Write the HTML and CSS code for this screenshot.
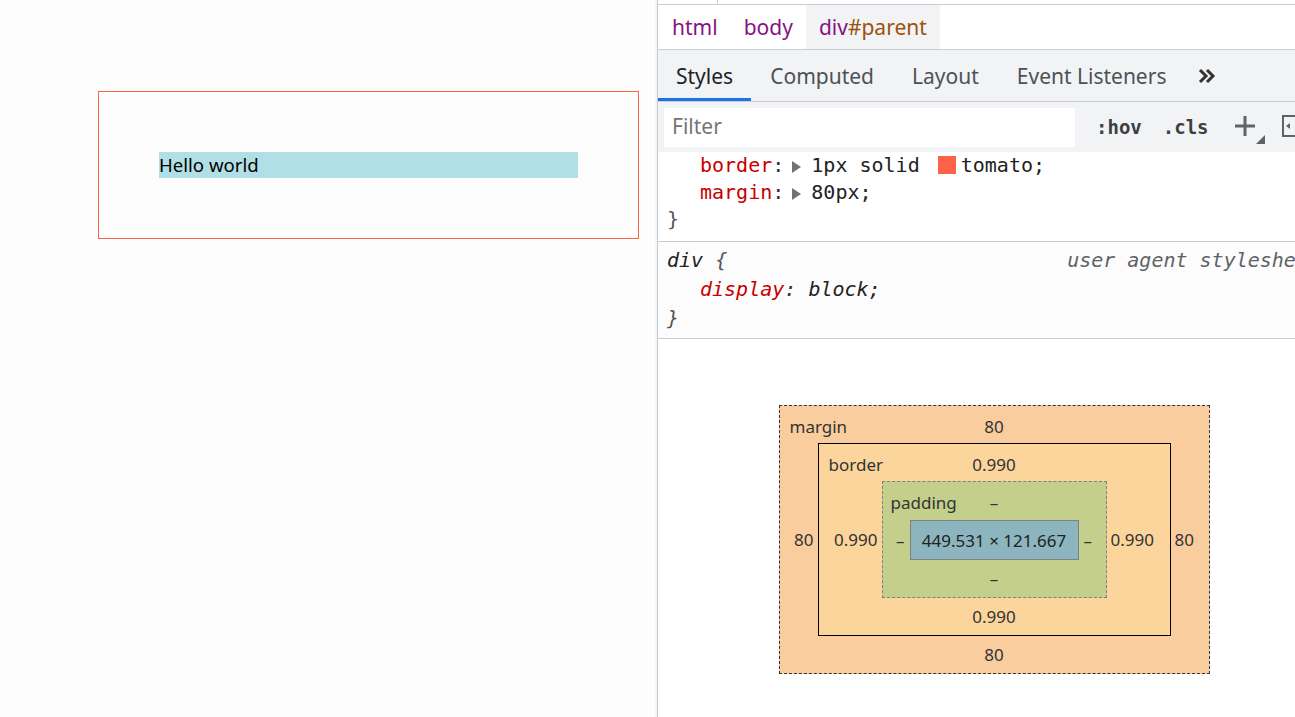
FILE: index.html
```html
<!DOCTYPE html>
<html>
<head>
<meta charset="utf-8">
<link rel="stylesheet" href="styles.css">
</head>
<body>
<div class="screen">
  <div class="page">
    <div class="parent"><div class="child">Hello world</div></div>
  </div>
  <div class="devtools">
    <div class="topstrip"><span class="tick"></span></div>
    <div class="crumbs">
      <span class="crumb tag">html</span>
      <span class="crumb tag">body</span>
      <span class="crumb sel"><span class="tag">div</span><span class="id">#parent</span></span>
    </div>
    <div class="tabs">
      <span class="tab active">Styles</span>
      <span class="tab">Computed</span>
      <span class="tab">Layout</span>
      <span class="tab">Event Listeners</span>
      <span class="tab more"><svg width="18" height="16" viewBox="0 0 18 16"><path d="M2 2 L8 8 L2 14 M9 2 L15 8 L9 14" fill="none" stroke="#333" stroke-width="3"/></svg></span>
    </div>
    <div class="toolbar">
      <div class="filter">Filter</div>
      <span class="tbtn">:hov</span>
      <span class="tbtn">.cls</span>
      <svg class="plus" width="32" height="34" viewBox="0 0 32 34"><path d="M0 13 H20 M10 3 V23" stroke="#5f6368" stroke-width="3" fill="none"/><path d="M30 22 V31 H21 Z" fill="#5f6368"/></svg>
      <svg class="boxicon" width="24" height="24" viewBox="0 0 24 24"><rect x="1" y="1" width="21" height="20" fill="none" stroke="#5f6368" stroke-width="2"/><path d="M8 8 L4 11 L8 14 Z" fill="#5f6368"/></svg>
    </div>
    <div class="rule r1">
      <div class="decl"><span class="prop">border</span><span class="colon">:</span><span class="tri"></span><span class="val">1px solid <span class="swatch"></span>tomato;</span></div>
      <div class="decl"><span class="prop">margin</span><span class="colon">:</span><span class="tri"></span><span class="val">80px;</span></div>
      <div class="brace">}</div>
    </div>
    <div class="rule r2">
      <div class="selline"><span class="selector"><span class="sel-name">div</span> <span class="brace">{</span></span><span class="origin">user agent stylesheet</span></div>
      <div class="decl"><span class="prop">display</span><span class="colon">:</span> <span class="val">block;</span></div>
      <div class="brace">}</div>
    </div>
    <div class="metrics">
      <div class="box mbox">
        <div class="toprow"><span class="lbl">margin</span><span>80</span><span></span></div>
        <div class="lval">80</div>
        <div class="box bbox">
          <div class="toprow"><span class="lbl">border</span><span>0.990</span><span></span></div>
          <div class="lval">0.990</div>
          <div class="box pbox">
            <div class="toprow"><span class="lbl">padding</span><span>–</span><span></span></div>
            <div class="lval">–</div>
            <div class="cbox">449.531 × 121.667</div>
            <div class="rval">–</div>
            <div class="botrow">–</div>
          </div>
          <div class="rval">0.990</div>
          <div class="botrow">0.990</div>
        </div>
        <div class="rval">80</div>
        <div class="botrow">80</div>
      </div>
    </div>
  </div>
</div>
</body>
</html>
```
FILE: styles.css
```css
html, body {
  margin: 0;
  padding: 0;
  overflow: hidden;
  background: #fdfdfd;
}
body {
  font-family: "Noto Sans", "Open Sans", sans-serif;
}
.screen {
  display: flex;
  width: 1295px;
  height: 717px;
  overflow: hidden;
}
.page {
  width: 655px;
  flex-shrink: 0;
  background: #fdfdfd;
  border-right: 2px solid #f3f4f6;
}
.parent {
  box-sizing: border-box;
  width: 541px;
  height: 148px;
  margin: 91px 0 0 98px;
  border: 1px solid tomato;
  padding: 60px;
}
.child {
  height: 26px;
  background: #b0e0e6;
  font-size: 18.6px;
  line-height: 26px;
  color: #000;
}
.devtools {
  width: 672px;
  flex-shrink: 0;
  border-left: 1px solid #c6c9cd;
  background: #fff;
  height: 717px;
}
.topstrip {
  height: 4px;
  border-bottom: 1px solid #cbcdd1;
}
.tick {
  display: block;
  width: 1px;
  height: 4px;
  margin-left: 59px;
  background: #c9d6ee;
}
.crumbs {
  display: flex;
  height: 44px;
  border-bottom: 1px solid #cbcdd1;
  padding-left: 1px;
  font-size: 21px;
}
.crumb {
  display: flex;
  align-items: center;
  padding: 0 13px;
}
.tag { color: #881280; }
.id { color: #9e520e; }
.crumb.sel { background: #f1f3f4; }
.tabs {
  display: flex;
  height: 51px;
  background: #f1f3f4;
  border-bottom: 1px solid #cbcdd1;
}
.tab {
  display: flex;
  align-items: center;
  padding: 0 19px 0;
  font-size: 21px;
  color: #4d5156;
}
.tab:first-child { padding: 0 18px; }
.tab.active {
  color: #202124;
  box-shadow: inset 0 -3px 0 #1a73e8;
}
.tab.more { padding-left: 13px; }
.toolbar {
  display: flex;
  align-items: center;
  height: 50px;
  background: #f1f3f4;
  padding-left: 6px;
}
.filter {
  box-sizing: border-box;
  width: 411px;
  height: 39px;
  background: #fff;
  padding-left: 8px;
  font-size: 21px;
  line-height: 37px;
  color: #757575;
  flex-shrink: 0;
}
.tbtn {
  font-family: "DejaVu Sans Mono", monospace;
  font-weight: bold;
  font-size: 19px;
  color: #3c4043;
  margin-left: 21px;
  flex-shrink: 0;
}
.plus {
  margin-left: 26px;
  margin-top: 6px;
  flex-shrink: 0;
}
.boxicon {
  margin-left: 15px;
  flex-shrink: 0;
}
.rule {
  font-family: "DejaVu Sans Mono", monospace;
  font-size: 20px;
  border-bottom: 1px solid #cbcdd1;
  color: #222;
  white-space: nowrap;
}
.r1 {
  line-height: 27px;
  padding: 0 0 8px 9px;
}
.r2 {
  line-height: 29px;
  padding: 4px 10px 5px 9px;
  font-style: italic;
  background: #fcfcfc;
}
.decl { padding-left: 33px; }
.prop { color: #c80000; }
.colon { color: #333; }
.tri {
  display: inline-block;
  width: 0;
  height: 0;
  border-left: 9px solid #727272;
  border-top: 6px solid transparent;
  border-bottom: 6px solid transparent;
  margin: 0 10px 0 8px;
  vertical-align: -1px;
}
.swatch {
  display: inline-block;
  width: 18px;
  height: 18px;
  background: tomato;
  margin: 0 5px 0 6px;
  vertical-align: -2px;
}
.brace { color: #555; }
.selline { display: flex; }
.sel-name { color: #222; }
.origin {
  margin-left: auto;
  color: #5f6368;
}
.metrics {
  display: flex;
  justify-content: center;
  padding-top: 66px;
  font-size: 17px;
  color: #333;
}
.box {
  display: grid;
}
.mbox {
  border: 1px dashed #333;
  background: #f9cd9d;
  grid-template-columns: 38px 353px 38px;
  grid-template-rows: 37px 193px 37px;
}
.bbox {
  box-sizing: border-box;
  border: 1px solid #000;
  background: #fbd59c;
  grid-template-columns: 63px 225px 63px;
  grid-template-rows: 37px 117px 37px;
}
.pbox {
  box-sizing: border-box;
  border: 1px dashed #808080;
  background: #c4cf8b;
  grid-template-columns: 27px 169px 27px;
  grid-template-rows: 38px 40px 37px;
}
.toprow {
  grid-column: 1 / -1;
  display: grid;
  grid-template-columns: 1fr auto 1fr;
  align-items: center;
  padding-top: 3px;
}
.mbox > .toprow .lbl { padding-left: 10px; }
.bbox > .toprow .lbl { padding-left: 10px; }
.pbox > .toprow .lbl { padding-left: 8px; }
.lval, .rval {
  display: flex;
  align-items: center;
}
.lval { justify-content: flex-end; padding-right: 4px; }
.rval { justify-content: flex-start; padding-left: 4px; }
.pbox > .lval { padding-right: 5px; }
.pbox > .rval { padding-left: 5px; }
.botrow {
  grid-column: 1 / -1;
  display: flex;
  align-items: center;
  justify-content: center;
}
.cbox {
  box-sizing: border-box;
  border: 1px solid #808080;
  background: #8cb5c0;
  display: flex;
  align-items: center;
  justify-content: center;
  color: #222;
  white-space: nowrap;
}
```
